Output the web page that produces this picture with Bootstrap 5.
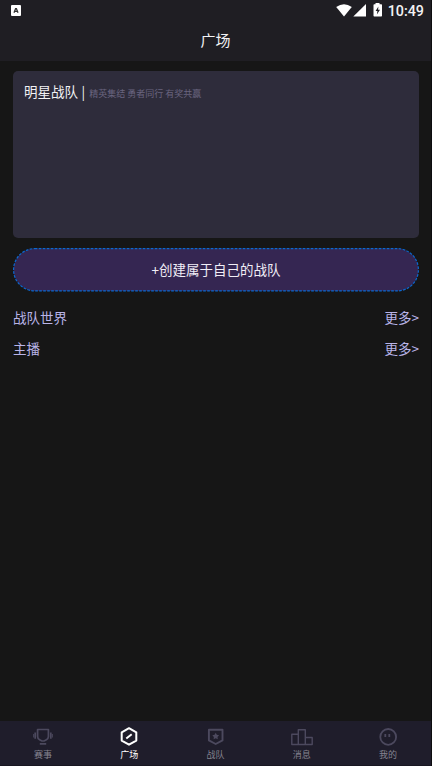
<!DOCTYPE html>
<html lang="zh-CN">
<head>
<meta charset="utf-8">
<meta name="viewport" content="width=device-width, initial-scale=1">
<title>广场</title>
<link href="https://cdn.jsdelivr.net/npm/bootstrap@5.3.0/dist/css/bootstrap.min.css" rel="stylesheet">
<style>
body{background:#161616;color:#f2f2f4;font-family:"Noto Sans CJK SC",sans-serif;font-size:13.5px;line-height:20px}
.screen{height:766px;border-right:1px solid #0d0d0f}
.top-area{height:61px;background:#1f1e23}
.status-row{height:21px;padding:0 7px 0 10px;font-family:Roboto,sans-serif;font-size:14.3px;font-weight:500}
.page-title{height:39px;font-size:15px;font-weight:400;line-height:37px}
.content-area{padding:10px 12px 0 13px}
.team-card{height:167px;border-radius:5px;background:#2e2c3b;padding:10px 11px}
.team-bar{margin:0 4px 0 3.5px}
.team-note{font-size:9px;color:#69647f}
.create-btn{height:44px;margin-top:10px;border:0;padding:0}
.create-btn svg{display:block}
.create-label{position:absolute;inset:0;line-height:42px;color:#f1eef7;font-size:13.5px}
.section-list{margin-top:10px}
.section-row{height:31px;line-height:31px;color:#b9b4e8}
.section-row a{color:inherit}
.tab-bar{height:45px;background:#1f1d2b;border-bottom:1px solid #181621}
.tab-bar .nav-link{padding:5px 0 0;color:#858390;font-size:9px;line-height:14px}
.tab-bar .nav-link svg{display:block;margin:0 auto 2px;color:#4c495e}
.tab-bar .nav-link.active,.tab-bar .nav-link.active svg{color:#fff}
</style>
</head>
<body>
<div class="screen d-flex flex-column overflow-hidden">
<header class="top-area flex-shrink-0">
<div class="status-row d-flex align-items-center justify-content-between">
<svg width="12" height="12" viewBox="0 0 12 12"><rect x="1" y="0" width="10" height="11" rx="1" fill="#fff"/><path d="M4 7.800 5.600 3.600h.8L8 7.800M4.600 6.400h2.800" fill="none" stroke="#333" stroke-width="1.300"/></svg>
<div class="d-flex align-items-center">
<svg width="52" height="15" viewBox="0 0 52 15" fill="#fff"><path d="M.2 4Q8 -1.300 15.800 4L8 13.500Z"/><path d="M30 1v12.500H17.300Z"/><path fill-rule="evenodd" d="M39.500 1.200V0h4v1.200h1.800q.7 0 .7.700v10.900q0 .7-.7.700h-7.100q-.7 0-.7-.7V1.900q0-.7.7-.7ZM42.400 3.500 39.600 8h1.800l-.5 3.600L44 6.800h-1.900Z"/></svg>
<span>10:49</span>
</div>
</div>
<h1 class="page-title text-center m-0">广场</h1>
</header>
<main class="content-area flex-grow-1">
<section class="team-card d-flex align-items-baseline"><span>明星战队</span><span class="team-bar">|</span><span class="team-note">精英集结 勇者同行 有奖共赢</span></section>
<button type="button" class="create-btn position-relative d-block w-100 bg-transparent">
<svg width="406" height="44" viewBox="0 0 406 44"><rect x=".6" y=".6" width="404.800" height="42.300" rx="21.100" fill="#352652" stroke="#0b68d0" stroke-width="1.200" stroke-dasharray="2.700 1.300"/></svg>
<span class="create-label">+创建属于自己的战队</span>
</button>
<div class="section-list">
<div class="section-row d-flex justify-content-between"><span>战队世界</span><a class="text-decoration-none" href="#">更多&gt;</a></div>
<div class="section-row d-flex justify-content-between"><span>主播</span><a class="text-decoration-none" href="#">更多&gt;</a></div>
</div>
</main>
<nav class="tab-bar nav nav-justified flex-nowrap flex-shrink-0">
<a class="nav-link w-100" href="#"><svg width="22" height="20" viewBox="0 0 22 20" fill="none" stroke="currentColor" stroke-width="1.700"><path d="M5.600 3.500h10.800v7q0 2.300-2 3.300L12 15h-2l-2.400-1.200q-2-1-2-3.300ZM7.800 17.900h6.400M3.200 6.500v6.300M18.800 6.500v6.300" stroke-linejoin="round"/><path stroke-width="1" d="M1.700 8v3.500M20.300 8v3.500"/></svg>赛事</a>
<a class="nav-link active w-100" href="#"><svg width="22" height="20" viewBox="0 0 22 20" fill="none" stroke="currentColor" stroke-width="2" stroke-linejoin="round"><path d="m11 2.200 7.300 4.200v8.200L11 18.700l-7.300-4.100V6.400ZM8.300 12.500l5.400-4.200"/></svg>广场</a>
<a class="nav-link w-100" href="#"><svg width="22" height="20" viewBox="0 0 22 20" fill="none" stroke="currentColor" stroke-width="1.900" stroke-linejoin="round"><path d="M3.900 3.700h13.600v10.700l-6.800 3.600-6.800-3.600Z"/><path fill="currentColor" stroke="none" d="m10.700 6.800 1.100 2 2.300.4-1.600 1.700.3 2.300-2.100-1-2.100 1 .3-2.300-1.600-1.700 2.300-.4Z"/></svg>战队</a>
<a class="nav-link w-100" href="#"><svg width="22" height="20" viewBox="0 0 22 20" fill="none" stroke="currentColor" stroke-width="1.400" stroke-linejoin="round"><path d="M.8 8.300h6.500v10.200H.8ZM7.300 3.800h7v14.700h-7ZM14.300 11.500h6.900v7h-6.900Z"/></svg>消息</a>
<a class="nav-link w-100" href="#"><svg width="22" height="20" viewBox="0 0 22 20" fill="none" stroke="currentColor" stroke-width="1.800"><circle cx="11.200" cy="10.900" r="7.900"/><path d="M8.300 7.900v3M12.300 7.900v3"/></svg>我的</a>
</nav>
</div>
<script src="https://cdn.jsdelivr.net/npm/bootstrap@5.3.0/dist/js/bootstrap.bundle.min.js"></script>
</body>
</html>
